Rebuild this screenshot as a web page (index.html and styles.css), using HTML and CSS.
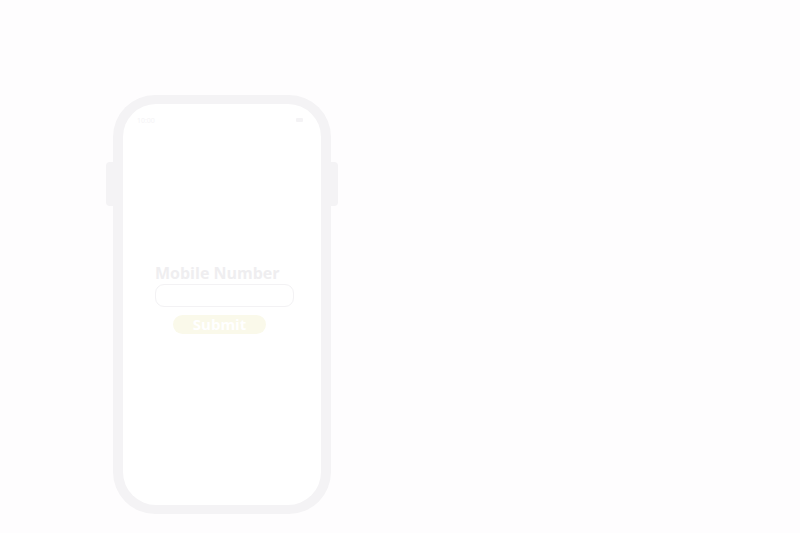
FILE: index.html
```html
<!DOCTYPE html>
<html>
<head>
<meta charset="utf-8">
<link rel="stylesheet" href="styles.css">
</head>
<body>
<div class="stage">
  <div class="phone-wrap">
    <div class="side-btn left"></div>
    <div class="phone">
      <div class="screen">
        <div class="status">
          <span class="time">10:00</span>
          <span class="batt"></span>
        </div>
        <div class="form">
          <div class="label">Mobile Number</div>
          <div class="input"></div>
          <div class="submit">Submit</div>
        </div>
      </div>
    </div>
    <div class="side-btn right"></div>
  </div>
</div>
</body>
</html>
```

FILE: styles.css
```css
html, body {
  margin: 0;
  padding: 0;
  width: 800px;
  height: 533px;
  overflow: hidden;
  background: #fefdfe;
  font-family: "Open Sans", "DejaVu Sans", sans-serif;
}
.stage {
  padding: 95px 0 0 106px;
}
.phone-wrap {
  display: flex;
  align-items: flex-start;
}
.side-btn {
  width: 7px;
  height: 44px;
  margin-top: 67px;
  background: #f4f3f5;
}
.side-btn.left { border-radius: 4px 0 0 4px; }
.side-btn.right { border-radius: 0 4px 4px 0; }
.phone {
  width: 218px;
  height: 419px;
  box-sizing: border-box;
  padding: 9px 10px;
  border-radius: 42px;
  background: #f4f3f5;
}
.screen {
  height: 100%;
  background: #ffffff;
  border-radius: 33px;
  box-sizing: border-box;
  padding: 12px 18px 0 12px;
}
.status {
  display: flex;
  justify-content: space-between;
  align-items: center;
  height: 8px;
}
.time {
  font-size: 7px;
  color: #f4f3f5;
  padding-left: 2px;
}
.batt {
  width: 7px;
  height: 4px;
  background: #f4f3f5;
  border-radius: 1px;
}
.form {
  margin-top: 140px;
  padding-left: 20px;
  display: flex;
  flex-direction: column;
  align-items: flex-start;
}
.label {
  font-size: 16px;
  font-weight: 700;
  color: #efeef0;
  line-height: 18px;
}
.input {
  margin-top: 2px;
  width: 139px;
  height: 23px;
  box-sizing: border-box;
  border: 1px solid #f3f2f4;
  border-radius: 9px;
  background: #ffffff;
}
.submit {
  margin-top: 8px;
  margin-left: 18px;
  width: 93px;
  height: 19px;
  border-radius: 10px;
  background: #faf9ea;
  color: #ffffff;
  font-size: 15px;
  font-weight: 700;
  line-height: 19px;
  text-align: center;
}
```
